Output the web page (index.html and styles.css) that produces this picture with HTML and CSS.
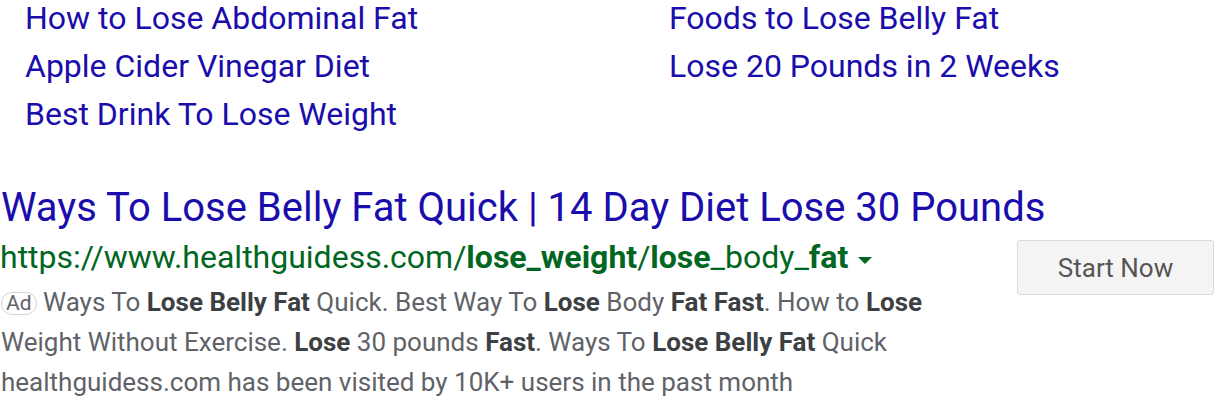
FILE: index.html
```html
<!DOCTYPE html>
<html>
<head>
<meta charset="utf-8">
<link rel="stylesheet" href="styles.css">
</head>
<body>
<div class="sitelinks">
  <a class="sl" href="#">How to Lose Abdominal Fat</a>
  <a class="sl" href="#">Foods to Lose Belly Fat</a>
  <a class="sl" href="#">Apple Cider Vinegar Diet</a>
  <a class="sl" href="#">Lose 20 Pounds in 2 Weeks</a>
  <a class="sl" href="#">Best Drink To Lose Weight</a>
</div>
<div class="ad">
  <a class="title" href="#">Ways To Lose Belly Fat Quick | 14 Day Diet Lose 30 Pounds</a>
  <div class="row">
    <div class="main">
      <div class="url">https://www.healthguidess.com/<b>lose_weight</b>/<b>lose</b>_body_<b>fat</b><span class="caret"></span></div>
      <div class="desc"><span class="badge">Ad</span> Ways To <b>Lose Belly Fat</b> Quick. Best Way To <b>Lose</b> Body <b>Fat Fast</b>. How to <b>Lose</b><br>Weight Without Exercise. <b>Lose</b> 30 pounds <b>Fast</b>. Ways To <b>Lose Belly Fat</b> Quick<br>healthguidess.com has been visited by 10K+ users in the past month</div>
    </div>
    <div class="cta">Start Now</div>
  </div>
</div>
</body>
</html>
```
FILE: styles.css
```css
html, body {
  margin: 0;
  padding: 0;
  background: #fff;
  font-family: Roboto, "Liberation Sans", Arial, sans-serif;
}
.sitelinks {
  display: grid;
  grid-template-columns: 644px auto;
  row-gap: 12px;
  padding-left: 25px;
  font-size: 32px;
  line-height: 36px;
}
.sl {
  color: #1a0dab;
  text-decoration: none;
  justify-self: start;
}
.ad {
  margin-top: 52px;
  padding-left: 1px;
  padding-right: 2px;
}
.title {
  display: block;
  color: #1a0dab;
  text-decoration: none;
  font-size: 40px;
  line-height: 48px;
}
.row {
  display: flex;
  justify-content: space-between;
  align-items: flex-start;
  margin-top: 5px;
}
.url {
  color: #006621;
  font-size: 32px;
  line-height: 40px;
  display: flex;
  align-items: center;
  white-space: nowrap;
  margin-left: -1px;
}
.url b { font-weight: 700; }
.caret {
  width: 0;
  height: 0;
  border-left: 7px solid transparent;
  border-right: 7px solid transparent;
  border-top: 7px solid #006621;
  margin-left: 10px;
  margin-top: 6px;
}
.desc {
  color: #5f6368;
  font-size: 26px;
  line-height: 40px;
  margin-top: 5px;
}
.desc b { color: #3c4043; font-weight: 700; }
.badge {
  display: inline-block;
  border: 1px solid #d3d3d3;
  border-radius: 11px;
  padding: 0 4px;
  font-size: 21px;
  line-height: 21px;
  color: #5f6368;
  vertical-align: 1px;
}
.cta {
  width: 195px;
  height: 53px;
  margin-top: 3px;
  border: 1px solid #dadada;
  border-radius: 3px;
  background: #f4f4f4;
  color: #555;
  font-size: 26px;
  display: flex;
  align-items: center;
  justify-content: center;
}
```
